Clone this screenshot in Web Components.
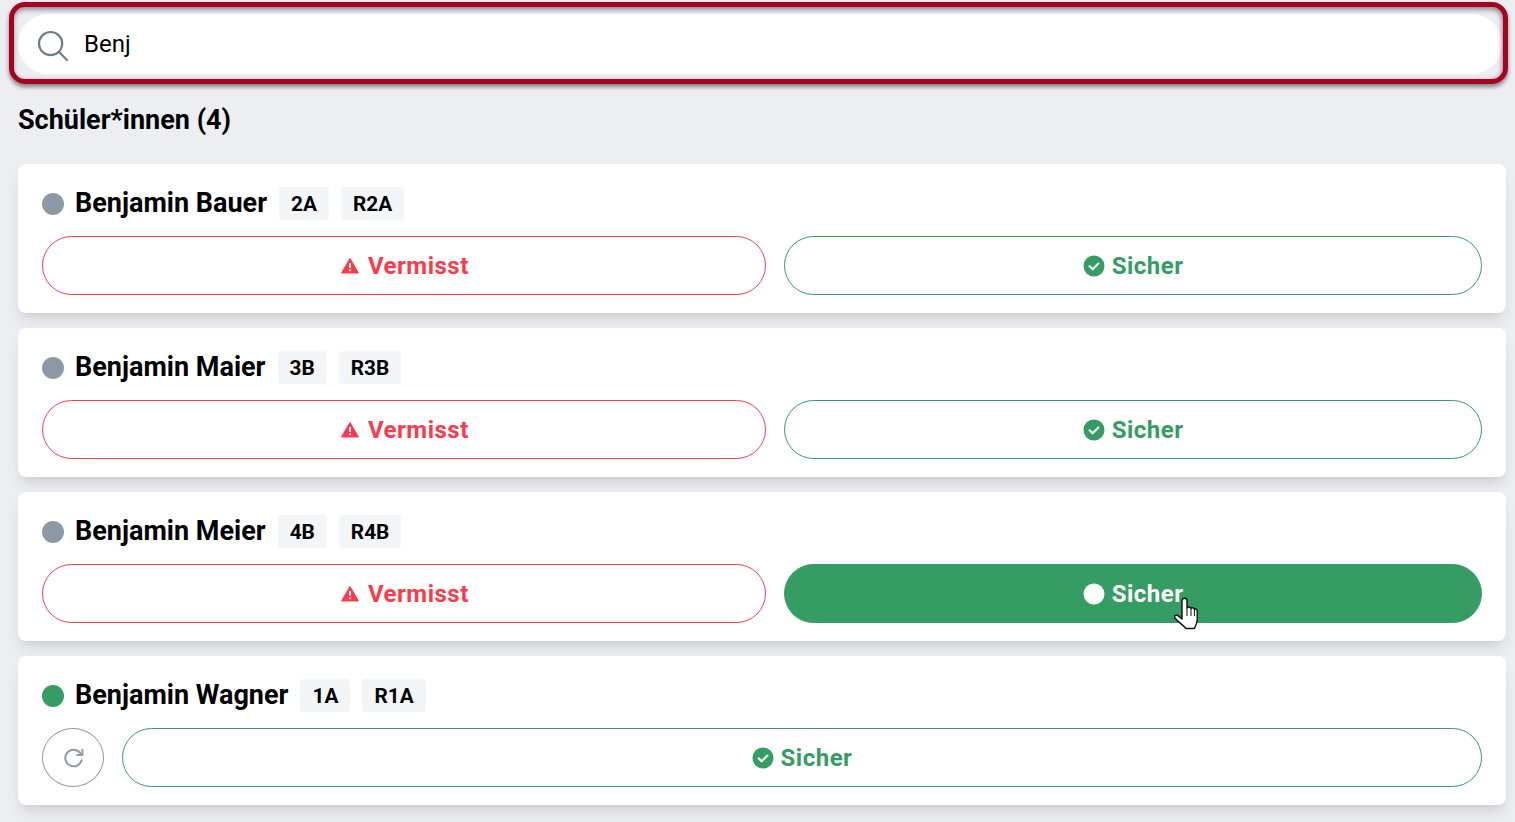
<!DOCTYPE html>
<html lang="de">
<head>
<meta charset="utf-8">
<title>Schüler*innen</title>
<style>
  html, body { margin: 0; height: 100%; }
  body { background: #eceef2; font-family: Roboto, "Liberation Sans", sans-serif; color: #000; overflow: hidden; }
</style>
</head>
<body>
<search-page>
  <search-box slot="search" value="Benj"></search-box>
  <student-card name="Benjamin Bauer" klasse="2A" raum="R2A"></student-card>
  <student-card name="Benjamin Maier" klasse="3B" raum="R3B"></student-card>
  <student-card name="Benjamin Meier" klasse="4B" raum="R4B" hover></student-card>
  <student-card name="Benjamin Wagner" klasse="1A" raum="R1A" state="safe"></student-card>
</search-page>

<script>
  const ICONS = {
    warn: `<svg class="warn" viewBox="0 0 18 16" width="18" height="16"><path d="M9 1.2L17 14.8H1Z" fill="currentColor" stroke="currentColor" stroke-width="1.6" stroke-linejoin="round"/><path d="M8 5h2l-.2 5H8.200Z" fill="#fff"/><circle cx="9" cy="12.300" r="1.100" fill="#fff"/></svg>`,
    check: `<svg viewBox="0 0 22 22" width="22" height="22"><circle cx="11" cy="11" r="10.5" fill="currentColor"/><path d="M6.6 11.3l3 3 5.8-5.8" fill="none" stroke="#fff" stroke-width="2.1" stroke-linecap="round" stroke-linejoin="round"/></svg>`,
    dot: `<svg viewBox="0 0 22 22" width="22" height="22"><circle cx="11" cy="11" r="10.5" fill="#fff"/></svg>`,
    redo: `<svg viewBox="0 0 22 22" width="22" height="22" fill="none" stroke="#8f9ba8" stroke-width="2" stroke-linecap="round" stroke-linejoin="round"><path d="M18.6 13.2a8.3 8.3 0 1 1-1.700-7.600l2.100 2.200"/><path d="M19.4 2.800v5.200h-5.200"/></svg>`,
    search: `<svg viewBox="0 0 32 32" width="32" height="32" fill="none" stroke="#6c7f8d" stroke-width="2.2" stroke-linecap="round"><circle cx="13.6" cy="13.6" r="11.6"/><path d="M22 22l8 8"/></svg>`,
    hand: `<svg viewBox="0 0 24 33" width="24" height="33"><path d="M8 3.5c0-3 5-3 5 0V11c1-1.6 4-1.4 4 .6c.8-1.4 3.4-1.2 3.4.8c.8-.8 2.8-.6 2.8 1.4V23c0 4-1.8 6-3 8.5H12C9 28 5 26 1 21c-1.6-2 1-3.6 3-2.4L8 22Z" fill="#fff" stroke="#111" stroke-width="1.4" stroke-linejoin="round"/><path d="M13 11v8M17 11.6V19M20.4 12.4V19" fill="none" stroke="#111" stroke-width="1"/></svg>`
  };

  class SearchPage extends HTMLElement {
    constructor() {
      super();
      this.attachShadow({ mode: "open" });
      this.shadowRoot.innerHTML = `
        <style>
          :host { display: block; padding: 0 9px 0 18px; }
          h2 { margin: 0; padding: 28px 0 26px; font-size: 27px; line-height: 36px; font-weight: 700; }
          .list { display: flex; flex-direction: column; gap: 15px; }
        </style>
        <slot name="search"></slot>
        <h2>Schüler*innen (4)</h2>
        <div class="list"><slot></slot></div>
      `;
    }
  }

  class SearchBox extends HTMLElement {
    constructor() {
      super();
      this.attachShadow({ mode: "open" });
      this.shadowRoot.innerHTML = `
        <style>
          :host { display: block; position: relative; padding-top: 14px; }
          .field { display: flex; align-items: center; gap: 15px; height: 60px; padding-left: 19px; margin-right: 4px; background: #fff; border-radius: 30px; }
          svg { display: block; }
          .icon { height: 32px; margin-top: 3px; }
          input { flex: 1; border: 0; outline: 0; background: transparent; padding: 0; font: 400 24px Roboto, sans-serif; color: #000; }
          .mark { position: absolute; left: -9px; right: -2px; top: 2px; bottom: -10px; border: 5px solid #a80021; border-radius: 16px; pointer-events: none;
            box-shadow: 0 3px 4px rgba(0,0,0,.45), inset 0 3px 5px rgba(0,0,0,.35), inset -2px 0 4px rgba(0,0,0,.15); }
        </style>
        <div class="field">
          <span class="icon">${ICONS.search}</span>
          <input type="text" value="${this.getAttribute("value") || ""}">
        </div>
        <div class="mark"></div>
      `;
    }
  }

  class TagChip extends HTMLElement {
    constructor() {
      super();
      this.attachShadow({ mode: "open" });
      this.shadowRoot.innerHTML = `
        <style>
          :host { display: block; padding: 0 12px; height: 33px; line-height: 34px; background: #f3f6f9; border-radius: 4px; font-size: 20.8px; font-weight: 700; }
        </style>
        <slot></slot>
      `;
    }
  }

  class StatusButton extends HTMLElement {
    constructor() {
      super();
      const kind = this.getAttribute("kind");
      const filled = this.hasAttribute("filled");
      const icon = kind === "missing" ? ICONS.warn : filled ? ICONS.dot : ICONS.check;
      this.attachShadow({ mode: "open" });
      this.shadowRoot.innerHTML = `
        <style>
          :host { display: flex; flex: 1 1 auto; position: relative; align-items: center; justify-content: center; gap: 7px; height: 59px; box-sizing: border-box;
            border: 1px solid currentColor; border-radius: 30px; background: #fff; font-size: 24px; letter-spacing: .5px; font-weight: 700; }
          :host([kind="missing"]) { color: #f93b4b; }
          :host([kind="missing"]) .label { margin-right: -1px; }
          :host([kind="safe"]) { color: #359d63; }
          :host([filled]) { background: #359d63; border-color: #359d63; }
          :host([filled]) .label { color: #fff; }
          svg { display: block; }
          .warn { margin: 0 1.5px 0 1px; }
          .hand { position: absolute; left: 389px; top: 32px; }
        </style>
        ${icon}<span class="label"><slot></slot></span>
        ${filled ? `<span class="hand">${ICONS.hand}</span>` : ""}
      `;
    }
  }

  class StudentCard extends HTMLElement {
    constructor() {
      super();
      const safe = this.getAttribute("state") === "safe";
      const actions = safe
        ? `<button class="reset" aria-label="Zurücksetzen">${ICONS.redo}</button>
           <status-button kind="safe">Sicher</status-button>`
        : `<status-button kind="missing">Vermisst</status-button>
           <status-button kind="safe" ${this.hasAttribute("hover") ? "filled" : ""}>Sicher</status-button>`;
      this.attachShadow({ mode: "open" });
      this.shadowRoot.innerHTML = `
        <style>
          :host { display: block; background: #fff; border-radius: 8px; padding: 23px 24px 18px; box-shadow: 0 10px 15px -3px rgba(0,0,0,.1), 0 4px 6px -2px rgba(0,0,0,.05); }
          .head { display: flex; align-items: center; gap: 12px; height: 33px; margin-bottom: 16px; }
          .dot { width: 22px; height: 22px; border-radius: 50%; background: #8d99a6; margin-right: -1px; }
          .dot.safe { background: #359d63; }
          .name { font-size: 27px; font-weight: 700; padding-bottom: 2px; }
          .actions { display: flex; gap: 18px; }
          .reset { flex: none; display: flex; align-items: center; justify-content: center; width: 62px; height: 59px; padding: 0 0 0 2px; background: #fff; border: 1px solid #8f9ba8; border-radius: 50%; }
        </style>
        <div class="head">
          <span class="dot ${safe ? "safe" : ""}"></span>
          <span class="name">${this.getAttribute("name")}</span>
          <tag-chip>${this.getAttribute("klasse")}</tag-chip>
          <tag-chip>${this.getAttribute("raum")}</tag-chip>
        </div>
        <div class="actions">${actions}</div>
      `;
    }
  }

  customElements.define("search-page", SearchPage);
  customElements.define("search-box", SearchBox);
  customElements.define("tag-chip", TagChip);
  customElements.define("status-button", StatusButton);
  customElements.define("student-card", StudentCard);
</script>
</body>
</html>
